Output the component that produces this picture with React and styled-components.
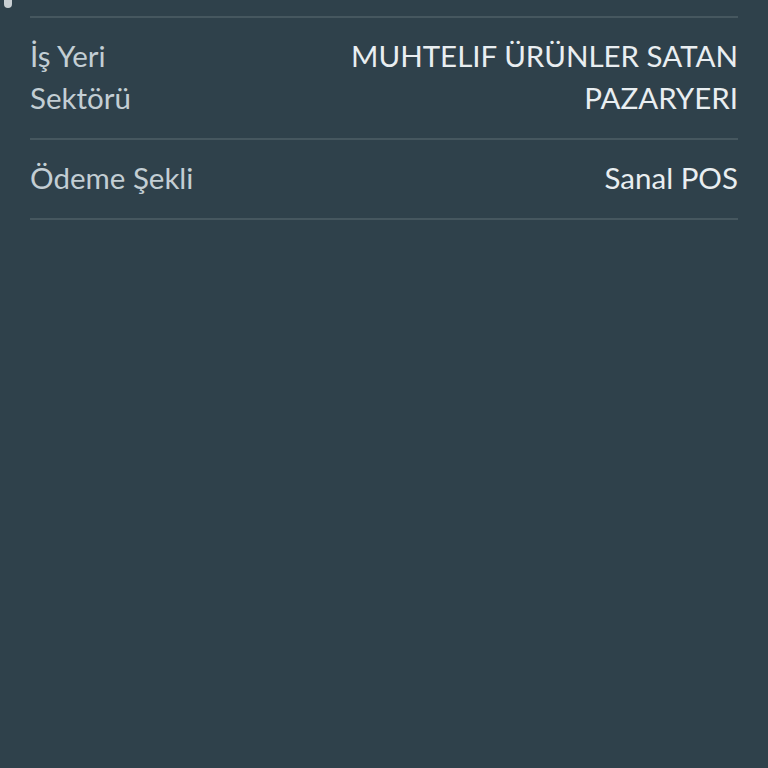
import React from 'react';
import styled, { createGlobalStyle } from 'styled-components';

const GlobalStyle = createGlobalStyle`
  html, body {
    margin: 0;
    padding: 0;
    background: #2f414b;
  }
  body {
    font-family: Lato, "Noto Sans", sans-serif;
  }
`;

const Page = styled.div`
  position: relative;
  width: 768px;
  height: 768px;
  background: #2f414b;
  overflow: hidden;
`;

const ScrollThumb = styled.div`
  position: absolute;
  left: 4px;
  top: -6px;
  width: 8px;
  height: 14px;
  border-radius: 4px;
  background: #c9cfd3;
`;

const List = styled.div`
  margin: 16px 30px 0;
  border-top: 2px solid #46575f;
`;

const Row = styled.div`
  display: flex;
  justify-content: space-between;
  align-items: flex-start;
  gap: 20px;
  padding: 17px 0 19px;
  border-bottom: 2px solid #46575f;
`;

const Label = styled.div`
  max-width: 175px;
  font-size: 29.5px;
  line-height: 42px;
  color: #c3ced4;
  font-weight: 400;
`;

const Value = styled.div`
  max-width: 440px;
  text-align: right;
  font-size: 29.5px;
  line-height: 42px;
  color: #e9eef1;
  font-weight: 400;
`;

const rows = [
  { label: 'İş Yeri Sektörü', value: 'MUHTELIF ÜRÜNLER SATAN PAZARYERI' },
  { label: 'Ödeme Şekli', value: 'Sanal POS' },
];

export default function App() {
  return (
    <Page>
      <GlobalStyle />
      <ScrollThumb />
      <List>
        {rows.map((r) => (
          <Row key={r.label}>
            <Label>{r.label}</Label>
            <Value>{r.value}</Value>
          </Row>
        ))}
      </List>
    </Page>
  );
}
